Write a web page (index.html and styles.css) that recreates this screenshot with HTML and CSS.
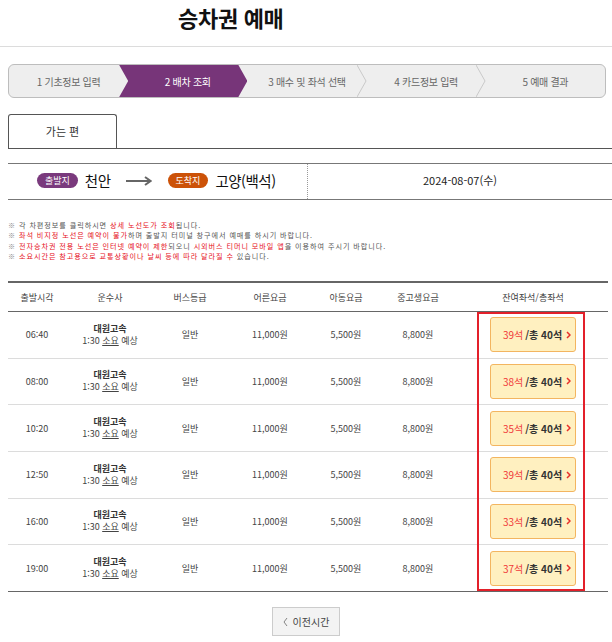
FILE: index.html
```html
<!DOCTYPE html>
<html lang="ko">
<head>
<meta charset="utf-8">
<title>승차권 예매</title>
<link rel="stylesheet" href="styles.css">
</head>
<body>
<header class="page-head">
  <h1 class="page-title">승차권 예매</h1>
</header>
<main class="wrap">
  <ol class="steps">
    <li class="step">1 기초정보 입력</li>
    <li class="step active">2 배차 조회</li>
    <li class="step">3 매수 및 좌석 선택<svg class="sep" viewBox="0 0 10 32" preserveAspectRatio="none"><polyline points="0,0 9,16 0,32" fill="none" stroke="#c9c9c9" stroke-width="1"/></svg></li>
    <li class="step">4 카드정보 입력<svg class="sep" viewBox="0 0 10 32" preserveAspectRatio="none"><polyline points="0,0 9,16 0,32" fill="none" stroke="#c9c9c9" stroke-width="1"/></svg></li>
    <li class="step">5 예매 결과</li>
  </ol>

  <div class="tabs">
    <div class="tab">가는 편</div>
  </div>

  <div class="route">
    <div class="route-left">
      <span class="badge badge-dep">출발지</span>
      <span class="city">천안</span>
      <svg class="arrow" viewBox="0 0 26 10"><line x1="0" y1="5" x2="24" y2="5" stroke="#666" stroke-width="2"/><polyline points="19,1 24.5,5 19,9" fill="none" stroke="#666" stroke-width="2"/></svg>
      <span class="badge badge-arr">도착지</span>
      <span class="city">고양(백석)</span>
    </div>
    <div class="route-date">2024-08-07(수)</div>
  </div>

  <ul class="notice">
    <li><span class="mark">※</span> 각 차편정보를 클릭하시면 <em>상세 노선도가 조회</em>됩니다.</li>
    <li><span class="mark">※</span> <em>좌석 비지정 노선은 예약이 불가</em>하며 출발지 터미널 창구에서 예매를 하시기 바랍니다.</li>
    <li><span class="mark">※</span> <em>전자승차권 전용 노선은 인터넷 예약이 제한</em>되오니 <em>시외버스 티머니 모바일 앱</em>을 이용하여 주시기 바랍니다.</li>
    <li><span class="mark">※</span> <em>소요시간은 참고용으로 교통상황이나 날씨 등에 따라 달라질 수</em> 있습니다.</li>
  </ul>

  <div class="table-wrap">
    <table class="bus">
      <colgroup>
        <col class="c1"><col class="c2"><col class="c3"><col class="c4"><col class="c5"><col class="c6"><col class="c7">
      </colgroup>
      <thead>
        <tr><th>출발시각</th><th>운수사</th><th>버스등급</th><th>어른요금</th><th>아동요금</th><th>중고생요금</th><th>잔여좌석/총좌석</th></tr>
      </thead>
      <tbody>
        <tr><td>06:40</td><td><b class="co">대원고속</b><span class="dur">1:30 <u>소요</u> 예상</span></td><td>일반</td><td>11,000원</td><td>5,500원</td><td>8,800원</td><td><button class="seat"><span class="left">39석</span> /총 40석 <svg class="chev" viewBox="0 0 5 8"><polyline points="1,1 4,4 1,7" fill="none" stroke="#e8302a" stroke-width="1.5"/></svg></button></td></tr>
        <tr><td>08:00</td><td><b class="co">대원고속</b><span class="dur">1:30 <u>소요</u> 예상</span></td><td>일반</td><td>11,000원</td><td>5,500원</td><td>8,800원</td><td><button class="seat"><span class="left">38석</span> /총 40석 <svg class="chev" viewBox="0 0 5 8"><polyline points="1,1 4,4 1,7" fill="none" stroke="#e8302a" stroke-width="1.5"/></svg></button></td></tr>
        <tr><td>10:20</td><td><b class="co">대원고속</b><span class="dur">1:30 <u>소요</u> 예상</span></td><td>일반</td><td>11,000원</td><td>5,500원</td><td>8,800원</td><td><button class="seat"><span class="left">35석</span> /총 40석 <svg class="chev" viewBox="0 0 5 8"><polyline points="1,1 4,4 1,7" fill="none" stroke="#e8302a" stroke-width="1.5"/></svg></button></td></tr>
        <tr><td>12:50</td><td><b class="co">대원고속</b><span class="dur">1:30 <u>소요</u> 예상</span></td><td>일반</td><td>11,000원</td><td>5,500원</td><td>8,800원</td><td><button class="seat"><span class="left">39석</span> /총 40석 <svg class="chev" viewBox="0 0 5 8"><polyline points="1,1 4,4 1,7" fill="none" stroke="#e8302a" stroke-width="1.5"/></svg></button></td></tr>
        <tr><td>16:00</td><td><b class="co">대원고속</b><span class="dur">1:30 <u>소요</u> 예상</span></td><td>일반</td><td>11,000원</td><td>5,500원</td><td>8,800원</td><td><button class="seat"><span class="left">33석</span> /총 40석 <svg class="chev" viewBox="0 0 5 8"><polyline points="1,1 4,4 1,7" fill="none" stroke="#e8302a" stroke-width="1.5"/></svg></button></td></tr>
        <tr><td>19:00</td><td><b class="co">대원고속</b><span class="dur">1:30 <u>소요</u> 예상</span></td><td>일반</td><td>11,000원</td><td>5,500원</td><td>8,800원</td><td><button class="seat"><span class="left">37석</span> /총 40석 <svg class="chev" viewBox="0 0 5 8"><polyline points="1,1 4,4 1,7" fill="none" stroke="#e8302a" stroke-width="1.5"/></svg></button></td></tr>
      </tbody>
    </table>
    <div class="highlight"></div>
  </div>

  <div class="pager">
    <button class="prev"><svg class="prev-chev" viewBox="0 0 5 10"><polyline points="4,1 1,5 4,9" fill="none" stroke="#777" stroke-width="0.9"/></svg>이전시간</button>
  </div>
</main>
</body>
</html>
```

FILE: styles.css
```css
* { box-sizing: border-box; }
html, body { margin: 0; padding: 0; background: #fff; }
body {
  font-family: "Noto Sans CJK KR", "Noto Sans", sans-serif;
  color: #333;
  width: 612px;
  overflow: hidden;
}

.page-head {
  padding: 4px 0 15px 178px;
  border-bottom: 1px solid #dcdcdc;
}
.page-title {
  margin: 0;
  font-size: 22px;
  line-height: 27px;
  font-weight: 700;
  color: #111;
  letter-spacing: -0.3px;
}

.wrap { padding: 0 0 0 8px; }

/* steps */
.steps {
  list-style: none;
  margin: 17px 0 0;
  padding: 0;
  width: 598px;
  height: 34px;
  display: flex;
  border: 1px solid #bdbdbd;
  border-radius: 6px;
  background: #eeeeee;
  overflow: hidden;
}
.step {
  position: relative;
  flex: 0 0 20%;
  display: flex;
  align-items: center;
  justify-content: center;
  font-size: 10px;
  color: #666;
  letter-spacing: -0.3px;
}
.step.active {
  flex: 0 0 calc(20% + 9px);
  margin-left: -9px;
  padding-left: 9px;
  background: #773579;
  color: #fff;
  clip-path: polygon(0 0, calc(100% - 9px) 0, 100% 50%, calc(100% - 9px) 100%, 0 100%, 9px 50%);
}
.sep {
  position: absolute;
  right: 0;
  top: 0;
  width: 10px;
  height: 100%;
}

/* tab */
.tabs {
  margin-top: 16px;
  border-bottom: 1px solid #555;
  height: 35px;
  display: flex;
}
.tab {
  width: 109px;
  height: 35px;
  border: 1px solid #555;
  border-bottom: 0;
  border-radius: 3px 3px 0 0;
  display: flex;
  align-items: center;
  justify-content: center;
  font-size: 11px;
  color: #333;
  padding-bottom: 2px;
}

/* route */
.route {
  margin-top: 14px;
  border-top: 1px solid #777;
  border-bottom: 1px solid #777;
  height: 37px;
  display: flex;
}
.route-left {
  width: 300px;
  border-right: 1px dotted #999;
  display: flex;
  align-items: center;
  padding-left: 29px;
  padding-bottom: 2px;
}
.badge {
  display: inline-block;
  height: 15px;
  line-height: 15px;
  padding: 0 8px;
  border-radius: 8px;
  color: #fff;
  font-size: 9px;
}
.badge-dep { background: #7a3a7d; }
.badge-arr { background: #cc5208; }
.city {
  font-size: 14.5px;
  color: #111;
  margin-left: 7px;
  letter-spacing: -0.5px;
}
.arrow {
  width: 26px;
  height: 10px;
  margin: 0 16px 0 15px;
}
.route-date {
  flex: 1;
  display: flex;
  align-items: center;
  justify-content: center;
  font-size: 11px;
  color: #222;
  padding-bottom: 4px;
}

/* notice */
.notice {
  list-style: none;
  margin: 20px 0 0;
  padding: 0;
  font-size: 7.1px;
  line-height: 10.35px;
  color: #555;
  letter-spacing: 0.95px;
}
.notice li { height: 10.35px; }
.notice em { font-style: normal; color: #e60f1b; }
.notice .mark { color: #888; }

/* table */
.table-wrap {
  position: relative;
  margin-top: 20px;
  width: 600px;
}
.bus {
  width: 600px;
  border-collapse: collapse;
  table-layout: fixed;
  border-top: 2px solid #666;
  border-bottom: 1px solid #666;
}
.c1 { width: 58px; }
.c2 { width: 88px; }
.c3 { width: 72px; }
.c4 { width: 88px; }
.c5 { width: 64px; }
.c6 { width: 80px; }
.c7 { width: 150px; }
.bus th {
  height: 29px;
  font-size: 9px;
  font-weight: 400;
  color: #444;
  border-bottom: 1px solid #666;
  padding: 0;
}
.bus td {
  height: 46.7px;
  font-size: 9px;
  color: #444;
  text-align: center;
  padding: 0;
  border-bottom: 1px solid #dcdcdc;
}
.bus tr:last-child td { border-bottom: 0; }
.co {
  display: block;
  font-weight: 700;
  color: #333;
  line-height: 12px;
}
.dur { display: block; line-height: 12px; }
.dur u { text-decoration-thickness: 1px; text-underline-offset: 1px; }

.seat {
  width: 86px;
  height: 35px;
  margin-left: 32px;
  border: 1px solid #f3b560;
  border-radius: 3px;
  background: #fff0c0;
  font-family: inherit;
  font-size: 10px;
  color: #333;
  font-weight: 700;
  padding: 0 0 0 8px;
  display: flex;
  align-items: center;
  justify-content: center;
}
.seat .left { color: #f03a3a; font-weight: 400; margin-right: 2px; }
.chev { width: 5px; height: 8px; margin-left: 4px; }

.highlight {
  position: absolute;
  left: 469px;
  top: 31px;
  width: 108px;
  height: 279px;
  border: 2px solid #e3202a;
  pointer-events: none;
}

/* pager */
.pager {
  display: flex;
  justify-content: center;
  margin-top: 15px;
  width: 596px;
}
.prev {
  width: 68px;
  height: 29px;
  border: 1px solid #ccc;
  background: #f3f3f3;
  font-family: inherit;
  font-size: 10px;
  color: #444;
  display: flex;
  align-items: center;
  justify-content: center;
  padding: 0;
}
.prev-chev { width: 5px; height: 10px; margin-right: 5px; }
```
